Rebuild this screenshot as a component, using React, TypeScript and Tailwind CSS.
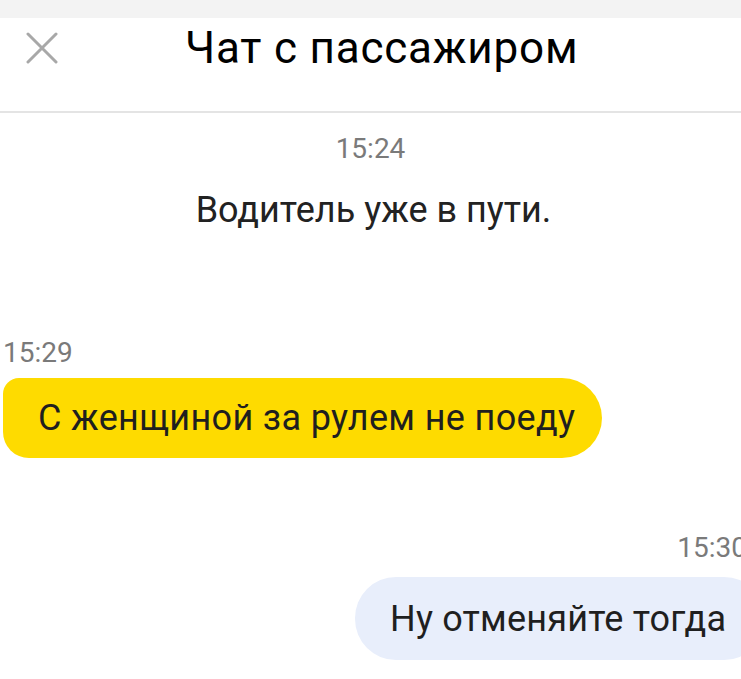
import React from 'react';

const font = { fontFamily: 'Roboto, "Noto Sans", sans-serif' };

const CloseIcon: React.FC = () => (
  <svg width="32" height="32" viewBox="0 0 32 32" fill="none">
    <path d="M2 2 L30 30 M30 2 L2 30" stroke="#a8a8a8" strokeWidth="3" strokeLinecap="round" />
  </svg>
);

const App: React.FC = () => {
  return (
    <div className="w-[741px] h-[679px] bg-white overflow-hidden text-[#1f1f1f]" style={font}>
      {/* status strip */}
      <div className="h-[18px] bg-[#f3f3f3]" />

      {/* header */}
      <div className="h-[95px] border-b-2 border-[#e4e4e4] flex items-start pt-[4px]">
        <div className="w-[185px] pl-[26px] mt-[10px]">
          <CloseIcon />
        </div>
        <h1 className="text-[44px] leading-[52px] tracking-[0.8px] font-normal text-black">Чат с пассажиром</h1>
      </div>

      {/* system message */}
      <div className="flex flex-col items-center pt-[20px]">
        <div className="text-[28px] leading-[32px] text-[#7a7a7a]">15:24</div>
        <div className="mt-[25px] ml-[6px] text-[36px] leading-[40px] text-[#222]">Водитель уже в пути.</div>
      </div>

      {/* incoming */}
      <div className="pl-[3px] pt-[107px]">
        <div className="text-[28px] leading-[32px] text-[#7a7a7a]">15:29</div>
        <div className="mt-[9px] w-[599px] h-[80px] rounded-tl-[16px] rounded-bl-[26px] rounded-r-[40px] bg-[#fedb00] flex items-center pl-[35px]">
          <span className="text-[36px] leading-[40px] tracking-[0.35px] text-[#1f1f1f]">С женщиной за рулем не поеду</span>
        </div>
      </div>

      {/* outgoing */}
      <div className="flex flex-col items-end pt-[74px]">
        <div className="text-[28px] leading-[32px] text-[#7a7a7a] mr-[-6px]">15:30</div>
        <div className="mt-[13px] w-[410px] h-[83px] mr-[-24px] rounded-[41px] bg-[#e8eefb] flex items-center pl-[35px]">
          <span className="text-[36px] leading-[40px] tracking-[0.2px] text-[#1f1f1f]">Ну отменяйте тогда</span>
        </div>
      </div>
    </div>
  );
};

export default App;
